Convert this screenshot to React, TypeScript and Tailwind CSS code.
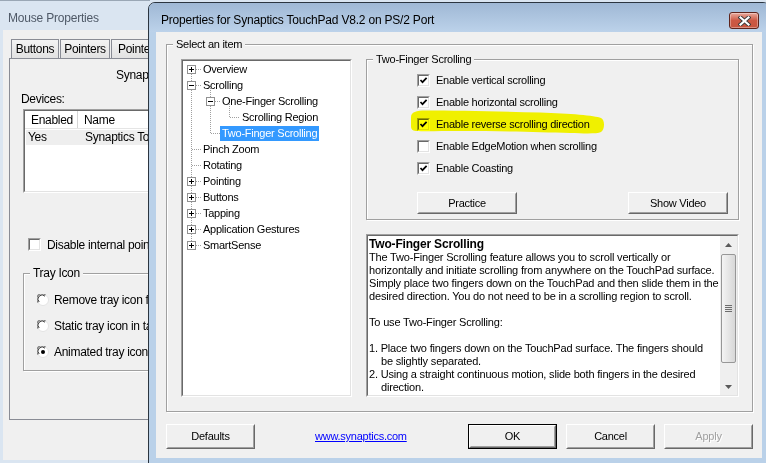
import React from "react";

function Sunken({ className = "", inner = "", children }: { className?: string; inner?: string; children?: React.ReactNode }) {
  return (
    <div className={"border border-t-[#a0a0a0] border-l-[#a0a0a0] border-b-white border-r-white " + className}>
      <div className={"h-full w-full border border-t-[#696969] border-l-[#696969] border-b-[#e3e3e3] border-r-[#e3e3e3] bg-white " + inner}>
        {children}
      </div>
    </div>
  );
}

function GroupBox({ label, className = "", children }: { label: string; className?: string; children?: React.ReactNode }) {
  return (
    <div className={"relative border border-[#a0a0a0] shadow-[inset_1px_1px_0_#fff,1px_1px_0_#fff] " + className}>
      <span className="absolute left-[6px] top-[-8px] bg-[#f0f0f0] px-[3px] leading-[14px] whitespace-nowrap">{label}</span>
      {children}
    </div>
  );
}

function CheckBox({ checked }: { checked?: boolean }) {
  return (
    <div className="h-[13px] w-[13px] shrink-0 border border-t-[#a0a0a0] border-l-[#a0a0a0] border-b-white border-r-white">
      <div className="h-full w-full border border-t-[#696969] border-l-[#696969] border-b-[#e3e3e3] border-r-[#e3e3e3] bg-white">
        {checked && (
          <svg width="9" height="9" viewBox="0 0 9 9" className="block">
            <path d="M1.5 4 L3.5 6.2 L7.6 1.8" fill="none" stroke="#000" strokeWidth="1.7" />
          </svg>
        )}
      </div>
    </div>
  );
}

function Radio({ checked }: { checked?: boolean }) {
  return (
    <svg width="12" height="12" viewBox="0 0 12 12" className="shrink-0">
      <circle cx="6" cy="6" r="5.5" fill="#fff" stroke="#e3e3e3" />
      <path d="M1.2 8.5 A5 5 0 0 1 8.5 1.2" fill="none" stroke="#808080" strokeWidth="1.2" />
      <path d="M2.2 8 A4 4 0 0 1 8 2.2" fill="none" stroke="#404040" strokeWidth="1" />
      {checked && <circle cx="6" cy="6" r="2" fill="#000" />}
    </svg>
  );
}

function Btn({ className = "", children, def, disabled }: { className?: string; children?: React.ReactNode; def?: boolean; disabled?: boolean }) {
  const body = (
    <div className="h-full w-full border border-t-white border-l-white border-b-[#696969] border-r-[#696969]">
      <div className="flex h-full w-full items-center justify-center border border-t-[#f0f0f0] border-l-[#f0f0f0] border-b-[#a0a0a0] border-r-[#a0a0a0] bg-[#f0f0f0]">
        <span className={disabled ? "text-[#a0a0a0] [text-shadow:1px_1px_0_#fff]" : "text-black"}>{children}</span>
      </div>
    </div>
  );
  if (def) return <div className={"border border-black " + className}>{body}</div>;
  return <div className={className}>{body}</div>;
}

const tree = [
  { label: "Overview", level: 0 },
  { label: "Scrolling", level: 0 },
  { label: "One-Finger Scrolling", level: 1 },
  { label: "Scrolling Region", level: 2 },
  { label: "Two-Finger Scrolling", level: 1, selected: true },
  { label: "Pinch Zoom", level: 0 },
  { label: "Rotating", level: 0 },
  { label: "Pointing", level: 0 },
  { label: "Buttons", level: 0 },
  { label: "Tapping", level: 0 },
  { label: "Application Gestures", level: 0 },
  { label: "SmartSense", level: 0 },
];

const levelPad = ["pl-[18px]", "pl-[37px]", "pl-[57px]"];

function TreeBox({ x, row, minus }: { x: number; row: number; minus?: boolean }) {
  const y = row * 16 + 4;
  return (
    <g>
      <rect x={x + 0.5} y={y + 0.5} width="8" height="8" fill="#fff" stroke="#919191" />
      <path d={`M${x + 2} ${y + 4.5}h5`} stroke="#000" />
      {!minus && <path d={`M${x + 4.5} ${y + 2}v5`} stroke="#000" />}
    </g>
  );
}

function TreeLines() {
  const dot = { stroke: "#a0a0a0", strokeDasharray: "1 1", fill: "none" } as const;
  const cy = (r: number) => r * 16 + 8.5;
  const level0Rows = [0, 1, 5, 6, 7, 8, 9, 10, 11];
  return (
    <svg className="absolute left-0 top-0" width="167" height="334" shapeRendering="crispEdges">
      <path d={`M8.5 ${cy(0)} V${cy(11)}`} {...dot} />
      {level0Rows.map((r) => (
        <path key={r} d={`M8.5 ${cy(r)} H18`} {...dot} />
      ))}
      <path d={`M27.5 ${cy(1)} V${cy(4)}`} {...dot} />
      <path d={`M27.5 ${cy(2)} H37`} {...dot} />
      <path d={`M27.5 ${cy(4)} H37`} {...dot} />
      <path d={`M46.5 ${cy(2)} V${cy(3)}`} {...dot} />
      <path d={`M46.5 ${cy(3)} H57`} {...dot} />
      {[0, 7, 8, 9, 10, 11].map((r) => (
        <TreeBox key={r} x={4} row={r} />
      ))}
      <TreeBox x={4} row={1} minus />
      <TreeBox x={23} row={2} minus />
    </svg>
  );
}

const helpLines: { t: string; b?: boolean; indent?: boolean }[] = [
  { t: "Two-Finger Scrolling", b: true },
  { t: "The Two-Finger Scrolling feature allows you to scroll vertically or" },
  { t: "horizontally and initiate scrolling from anywhere on the TouchPad surface." },
  { t: "Simply place two fingers down on the TouchPad and then slide them in the" },
  { t: "desired direction. You do not need to be in a scrolling region to scroll." },
  { t: "" },
  { t: "To use Two-Finger Scrolling:" },
  { t: "" },
  { t: "1. Place two fingers down on the TouchPad surface. The fingers should" },
  { t: "be slightly separated.", indent: true },
  { t: "2. Using a straight continuous motion, slide both fingers in the desired" },
  { t: "direction.", indent: true },
  { t: "3. Lift both fingers off the TouchPad surface to stop scrolling." },
];

function Scrollbar() {
  return (
    <div className="flex h-full w-[17px] shrink-0 flex-col bg-[#efefef]">
      <div className="flex h-[17px] items-center justify-center">
        <svg width="7" height="4" viewBox="0 0 7 4">
          <polygon points="0,4 3.5,0 7,4" fill="#5a5a5a" />
        </svg>
      </div>
      <div className="mx-[1px] mt-[1px] flex h-[109px] items-center justify-center rounded-[2px] border border-[#979797] bg-linear-to-r from-[#f4f4f4] to-[#d8d8d8]">
        <div className="flex flex-col gap-[1px]">
          <div className="h-[1px] w-[7px] bg-[#6d6d6d]" />
          <div className="h-[1px] w-[7px] bg-[#6d6d6d]" />
          <div className="h-[1px] w-[7px] bg-[#6d6d6d]" />
          <div className="h-[1px] w-[7px] bg-[#6d6d6d]" />
        </div>
      </div>
      <div className="flex-1" />
      <div className="flex h-[17px] items-center justify-center">
        <svg width="7" height="4" viewBox="0 0 7 4">
          <polygon points="0,0 7,0 3.5,4" fill="#5a5a5a" />
        </svg>
      </div>
    </div>
  );
}

function BackWindow() {
  return (
    <div className="absolute left-0 top-0 flex h-[463px] w-[150px] flex-col overflow-hidden border-t border-[#9aa7b5] bg-[#dae5f1]">
      <div className="flex h-[29px] items-start pl-[8px] pt-[10px] text-[12px] leading-[15px] tracking-[-0.2px] text-[#4f5967] whitespace-nowrap">Mouse Properties</div>
      <div className="ml-[3px] flex h-[430px] w-[400px] flex-col bg-[#f0f0f0] pt-[9px] text-[12px] tracking-[-0.3px]">
        <div className="flex h-[19px] pl-[8px]">
          <div className="flex w-[48px] items-center justify-center border border-b-0 border-[#898c95] bg-linear-to-b from-[#f3f3f3] to-[#e2e2e2]">Buttons</div>
          <div className="ml-[1px] flex w-[50px] items-center justify-center border border-b-0 border-[#898c95] bg-linear-to-b from-[#f3f3f3] to-[#e2e2e2]">Pointers</div>
          <div className="ml-[1px] flex w-[90px] items-center border border-b-0 border-[#898c95] bg-linear-to-b from-[#f3f3f3] to-[#e2e2e2] pl-[6px] whitespace-nowrap">Pointer Options</div>
        </div>
        <div className="ml-[6px] flex h-[362px] w-[380px] flex-col border border-[#898c95] pl-[13px]">
          <div className="ml-[93px] mt-[9px] h-[14px] leading-[14px] whitespace-nowrap">Synaptics</div>
          <div className="ml-[-2px] mt-[10px] h-[14px] leading-[14px]">Devices:</div>
          <Sunken className="mt-[3px] h-[84px] w-[300px]">
            <div className="flex h-[18px] border-b border-[#e5e5e5] leading-[18px]">
              <div className="w-[53px] border-r border-[#d5d5d5] pl-[6px]">Enabled</div>
              <div className="pl-[6px]">Name</div>
            </div>
            <div className="ml-[1px] mt-[1px] flex h-[15px] bg-[#eeeeee] leading-[15px]">
              <div className="w-[53px] pl-[2px]">Yes</div>
              <div className="pl-[6px] whitespace-nowrap">Synaptics TouchPad</div>
            </div>
          </Sunken>
          <div className="mt-[45px] flex h-[13px] items-center gap-[6px] pl-[5px]">
            <CheckBox />
            <span className="whitespace-nowrap leading-[14px]">Disable internal pointing device</span>
          </div>
          <GroupBox label="Tray Icon" className="mt-[22px] h-[98px] w-[300px]">
            <div className="flex flex-col pl-[13px] pt-[13px]">
              {[
                ["Remove tray icon from taskbar", false],
                ["Static tray icon in taskbar", false],
                ["Animated tray icon in taskbar", true],
              ].map(([t, c]) => (
                <div key={t as string} className="flex h-[26px] items-center gap-[5px]">
                  <Radio checked={c as boolean} />
                  <span className="whitespace-nowrap">{t as string}</span>
                </div>
              ))}
            </div>
          </GroupBox>
        </div>
      </div>
    </div>
  );
}

function FrontWindow() {
  const checks: [string, boolean][] = [
    ["Enable vertical scrolling", true],
    ["Enable horizontal scrolling", true],
    ["Enable reverse scrolling direction", true],
    ["Enable EdgeMotion when scrolling", false],
    ["Enable Coasting", true],
  ];
  return (
    <div className="absolute left-[148px] top-[2px] flex h-[470px] w-[622px] flex-col rounded-t-[7px] border border-[#2b3540] bg-[#bad1e9]">
      <div className="flex h-[29px] shrink-0 items-start rounded-t-[6px] bg-linear-to-b from-[#9fb8d5] to-[#bcd2ea] pl-[12px]">
        <div className="pt-[10px] text-[12px] leading-[15px] tracking-[-0.2px] text-black whitespace-nowrap">Properties for Synaptics TouchPad V8.2 on PS/2 Port</div>
        <div className="ml-auto mr-[10px] mt-[9px] flex h-[17px] w-[30px] items-center justify-center rounded-[3px] border border-[#5e241c] bg-linear-to-b from-[#e8a99d] via-[#cc5844] to-[#c8553f] shadow-[inset_0_0_0_1px_rgba(255,255,255,0.35)]">
          <svg width="13" height="10" viewBox="0 0 13 10">
            <path d="M2.5 1.5 L10.5 8.5 M10.5 1.5 L2.5 8.5" stroke="#3a3a3a" strokeWidth="4" strokeLinecap="square" />
            <path d="M2.5 1.5 L10.5 8.5 M10.5 1.5 L2.5 8.5" stroke="#fff" strokeWidth="2.2" strokeLinecap="square" />
          </svg>
        </div>
      </div>
      <div className="mx-[7px] flex h-[426px] flex-col bg-[#f0f0f0] pl-[10px] pr-[9px] pt-[12px] text-[11px] tracking-[-0.25px]">
        <GroupBox label="Select an item" className="h-[368px]">
          <div className="flex gap-[14px] pl-[14px] pt-[14px]">
            <Sunken className="h-[338px] w-[171px]" inner="relative">
              <TreeLines />
              <div className="relative flex flex-col">
                {tree.map((it) => (
                  <div key={it.label} className={"flex h-[16px] items-center " + levelPad[it.level]}>
                    <span className={"h-[15px] px-[2px] leading-[15px] whitespace-nowrap " + (it.selected ? "bg-[#3399ff] text-white" : "")}>{it.label}</span>
                  </div>
                ))}
              </div>
            </Sunken>
            <div className="flex w-[373px] flex-col gap-[14px]">
              <GroupBox label="Two-Finger Scrolling" className="h-[161px]">
                <div className="flex flex-col pl-[50px] pr-[10px] pt-[9px]">
                  {checks.map(([t, c]) => (
                    <div key={t} className="flex h-[22px] items-center gap-[6px]">
                      <CheckBox checked={c} />
                      <span className="whitespace-nowrap">{t}</span>
                    </div>
                  ))}
                  <div className="mt-[13px] flex justify-between">
                    <Btn className="h-[22px] w-[100px]">Practice</Btn>
                    <Btn className="h-[22px] w-[100px]">Show Video</Btn>
                  </div>
                </div>
              </GroupBox>
              <Sunken className="h-[163px] w-[373px]" inner="flex overflow-hidden">
                <div className="flex-1 overflow-hidden pl-[1px] pt-[2px] tracking-[-0.18px]">
                  {helpLines.map((l, i) => (
                    <div key={i} className={"h-[13px] leading-[13px] whitespace-nowrap " + (l.b ? "font-bold text-[12px] " : "") + (l.indent ? "pl-[12px]" : "")}>
                      {l.t}
                    </div>
                  ))}
                </div>
                <Scrollbar />
              </Sunken>
            </div>
          </div>
        </GroupBox>
        <div className="mt-[12px] flex h-[25px] items-center">
          <Btn className="h-[25px] w-[89px]">Defaults</Btn>
          <span className="ml-[60px] text-[#0000ff] underline">www.synaptics.com</span>
          <div className="ml-auto flex gap-[9px]">
            <Btn def className="h-[25px] w-[89px]">OK</Btn>
            <Btn className="h-[25px] w-[89px]">Cancel</Btn>
            <Btn disabled className="h-[25px] w-[89px]">Apply</Btn>
          </div>
        </div>
      </div>
    </div>
  );
}

function Highlighter() {
  return (
    <svg className="pointer-events-none absolute left-0 top-0 mix-blend-multiply" width="766" height="463">
      <path
        d="M411,117 C411,112 416,110.5 426,110.5 C455,110.5 500,111.5 540,112.5 C570,113.5 595,115.5 601,118 C605,120 605,129 601,132 C597,134 585,133.5 570,133 C540,132 500,131 460,131 C440,131 425,131.5 416,131 C412,130.5 411,129 411,126 Z"
        fill="#ffff00"
      />
    </svg>
  );
}

export default function App() {
  return (
    <div className="relative h-[463px] w-[766px] overflow-hidden bg-[#dae5f1] font-['Liberation_Sans',Arial,sans-serif] text-black">
      <BackWindow />
      <FrontWindow />
      <Highlighter />
    </div>
  );
}
